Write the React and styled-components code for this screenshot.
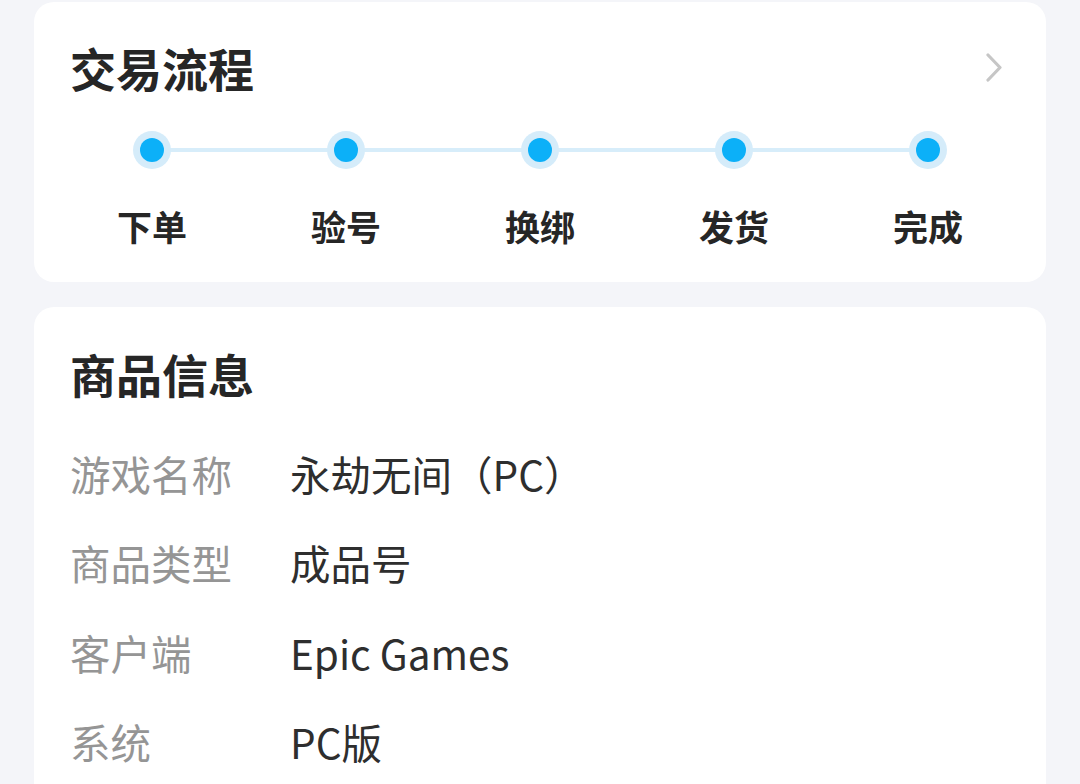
import React from 'react';
import styled, { createGlobalStyle } from 'styled-components';

const steps = ['下单', '验号', '换绑', '发货', '完成'];

const info = [
  { label: '游戏名称', value: '永劫无间（PC）' },
  { label: '商品类型', value: '成品号' },
  { label: '客户端', value: 'Epic Games' },
  { label: '系统', value: 'PC版' },
];

export default function App() {
  return (
    <>
      <GlobalStyle />
      <Page>
        <Card>
          <TitleRow>
            <Title>交易流程</Title>
            <Chevron width="17" height="29" viewBox="0 0 17 29">
              <polyline points="2,2 14,14.5 2,27" />
            </Chevron>
          </TitleRow>
          <Steps>
            {steps.map((name, i) => (
              <Step key={name} last={i === steps.length - 1}>
                <Dot />
                <StepName>{name}</StepName>
              </Step>
            ))}
          </Steps>
        </Card>

        <InfoCard>
          <Title>商品信息</Title>
          <InfoList>
            {info.map(item => (
              <InfoRow key={item.label}>
                <Label>{item.label}</Label>
                <Value>{item.value}</Value>
              </InfoRow>
            ))}
          </InfoList>
        </InfoCard>
      </Page>
    </>
  );
}

const GlobalStyle = createGlobalStyle`
  body {
    margin: 0;
    background: #f4f5f9;
    font-family: 'Noto Sans CJK SC', 'Noto Sans', sans-serif;
    overflow: hidden;
  }
`;

const Page = styled.div`
  display: flex;
  flex-direction: column;
  gap: 25px;
  padding: 2px 34px 0;
`;

const Card = styled.div`
  background: #fff;
  border-radius: 20px;
  padding: 35px 0 36px;
`;

const TitleRow = styled.div`
  display: flex;
  align-items: center;
  justify-content: space-between;
  padding: 0 43px 0 36px;
`;

const Title = styled.div`
  font-size: 46px;
  font-weight: 700;
  line-height: 60px;
  color: #262626;
`;

const Chevron = styled.svg`
  fill: none;
  stroke: #c6c6c6;
  stroke-width: 3.2;
  stroke-linecap: round;
  stroke-linejoin: round;
`;

const Steps = styled.div`
  display: grid;
  grid-template-columns: repeat(5, 194px);
  justify-content: center;
  margin-top: 34px;
`;

const Step = styled.div`
  position: relative;
  display: flex;
  flex-direction: column;
  align-items: center;
  gap: 37px;

  &::after {
    content: '';
    display: ${p => (p.last ? 'none' : 'block')};
    position: absolute;
    top: 17px;
    left: 50%;
    width: 100%;
    height: 4px;
    background: #d7edfa;
  }
`;

const Dot = styled.div`
  position: relative;
  z-index: 1;
  width: 24px;
  height: 24px;
  margin: 7px;
  border-radius: 50%;
  background: #0cb0f8;
  box-shadow: 0 0 0 7px #d5ecfa;
`;

const StepName = styled.div`
  font-size: 35px;
  font-weight: 700;
  line-height: 40px;
  color: #262626;
`;

const InfoCard = styled(Card)`
  padding: 36px 36px 40px;
`;

const InfoList = styled.div`
  display: flex;
  flex-direction: column;
  margin-top: 26px;
`;

const InfoRow = styled.div`
  display: flex;
  align-items: center;
  height: 89.5px;
`;

const Label = styled.div`
  width: 220px;
  flex-shrink: 0;
  font-size: 40.5px;
  line-height: 48px;
  color: #959595;
`;

const Value = styled.div`
  font-size: 40.5px;
  line-height: 48px;
  color: #2e2e2e;
`;
